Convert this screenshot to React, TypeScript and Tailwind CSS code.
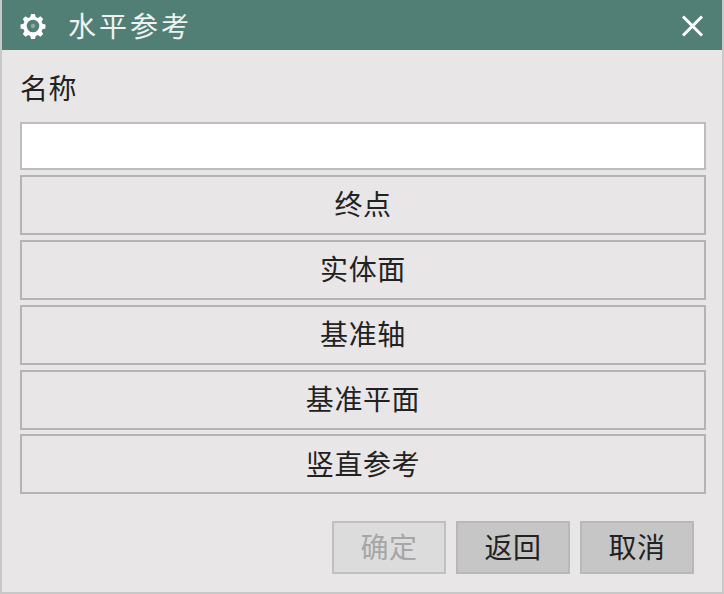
const rows = ["终点", "实体面", "基准轴", "基准平面", "竖直参考"];

export default function App() {
  return (
    <div className="w-[724px] h-[594px] flex flex-col bg-[#e8e6e7] border-l-2 border-r-2 border-b-2 border-[#c8c8c8] text-[#222222] text-[28px] tracking-[0.6px] leading-none font-['Liberation_Sans','Noto_Sans_CJK_SC',sans-serif] overflow-hidden">
      <div className="h-[50px] shrink-0 -mx-[1px] bg-[#527f75] flex items-center pl-[19px] pr-[19px] text-white">
        <svg width="26" height="26" viewBox="0 0 24 24" className="shrink-0 mt-[2px]">
          <path
            fillRule="evenodd"
            fill="#ffffff"
            d="M10.2 1h3.6l.7 2.8 1.9.8 2.5-1.5 2.5 2.5-1.5 2.5.8 1.9 2.8.7v3.6l-2.8.7-.8 1.9 1.5 2.5-2.5 2.5-2.5-1.5-1.9.8-.7 2.8h-3.6l-.7-2.8-1.9-.8-2.5 1.5-2.5-2.5 1.5-2.5-.8-1.9-2.8-.7v-3.6l2.8-.7.8-1.9-1.5-2.5 2.5-2.5 2.5 1.5 1.9-.8.7-2.8zM12 6.2a5.8 5.8 0 100 11.6 5.8 5.8 0 000-11.6z"
          />
          <circle cx="12" cy="12" r="2" fill="#ffffff" opacity="0.35" />
        </svg>
        <span className="ml-[22px] pt-[6px] text-[#eef3f1] tracking-[3px]">水平参考</span>
        <svg width="23" height="22" viewBox="0 0 23 22" className="ml-auto mt-[2px]">
          <path d="M2 1.5l19 19M21 1.5l-19 19" stroke="#ffffff" strokeWidth="3" />
        </svg>
      </div>
      <div className="flex-1 flex flex-col pl-[18px] pr-[16px]">
        <div className="h-[72px] shrink-0 flex items-center pt-[8px]">名称</div>
        <div className="h-[48px] shrink-0 bg-white border-2 border-[#bdbdbd]" />
        <div className="flex flex-col gap-[5px] mt-[5px]">
          {rows.map((label, i) => (
            <button
              key={label}
              className={
                i === 4
                  ? "-mt-[1px] h-[60px] flex items-center justify-center pt-[4px] border-2 border-[#b4b4b4] bg-[#e8e6e7]"
                  : "h-[60px] flex items-center justify-center pt-[2px] border-2 border-[#b4b4b4] bg-[#e8e6e7]"
              }
            >
              {label}
            </button>
          ))}
        </div>
        <div className="flex justify-end gap-[10px] mt-[27px] pr-[12px]">
          <button className="w-[114px] h-[53px] flex items-center justify-center pt-[3px] border-2 border-[#c0c0c0] bg-[#dcdcdc] text-[#a6a6a6]">
            确定
          </button>
          <button className="w-[114px] h-[53px] flex items-center justify-center pt-[3px] border-2 border-[#b8b8b8] bg-[#c6c6c6]">
            返回
          </button>
          <button className="w-[114px] h-[53px] flex items-center justify-center pt-[3px] border-2 border-[#b8b8b8] bg-[#c6c6c6]">
            取消
          </button>
        </div>
      </div>
    </div>
  );
}
